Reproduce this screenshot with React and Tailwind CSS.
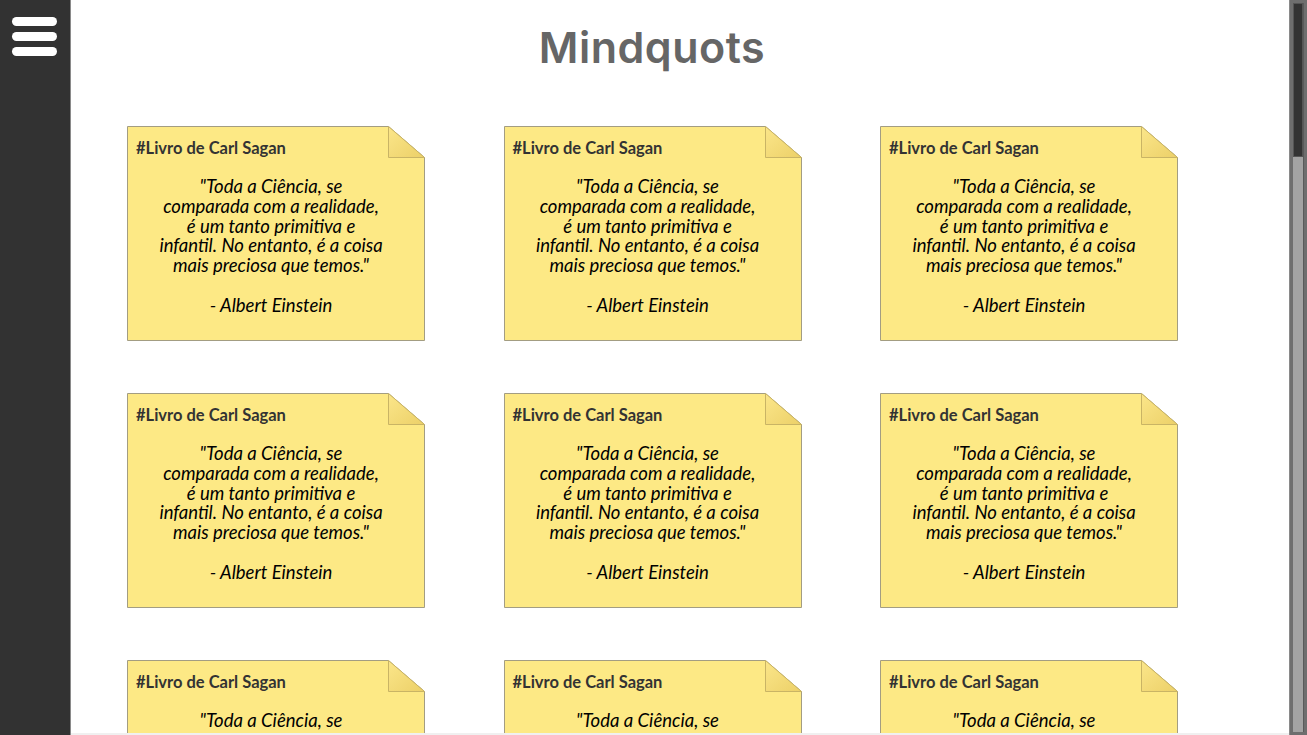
import React from 'react';

const quotes = Array.from({ length: 9 }, (_, i) => ({
  id: i,
  tag: '#Livro de Carl Sagan',
  lines: [
    '"Toda a Ciência, se',
    'comparada com a realidade,',
    'é um tanto primitiva e',
    'infantil. No entanto, é a coisa',
    'mais preciosa que temos."',
  ],
  author: '- Albert Einstein',
}));

// Sticky note with folded top-right corner
const NoteCard = ({ quote }) => (
  <div className="relative h-[215px] w-[298px]">
    <svg className="absolute inset-0" width="298" height="215" viewBox="0 0 298 215">
      <defs>
        <linearGradient id={`fold-${quote.id}`} x1="0" y1="0" x2="1" y2="1">
          <stop offset="0" stopColor="#fbe68a" />
          <stop offset="1" stopColor="#ecd068" />
        </linearGradient>
      </defs>
      <path d="M0.5 0.5 H261.5 L297.5 31.5 V214.5 H0.5 Z" fill="#fde985" stroke="#a39d82" />
      <path d="M261.5 0.5 V31.5 H297.5 Z" fill={`url(#fold-${quote.id})`} stroke="#c9b465" />
    </svg>
    <div className="relative px-[9px] pt-[13px] font-['Lato',sans-serif]">
      <div className="text-[16.5px] font-bold leading-[19px] text-[#333]">{quote.tag}</div>
      <div className="mt-[19px] pr-[10px] text-center text-[18.5px] italic leading-[19.8px] text-black">
        {quote.lines.map((l) => (
          <div key={l} className="whitespace-nowrap">{l}</div>
        ))}
        <div className="mt-[20px]">{quote.author}</div>
      </div>
    </div>
  </div>
);

export default function App() {
  return (
    <div className="flex h-[735px] w-[1307px] overflow-hidden bg-white">
      <aside className="w-[71px] shrink-0 border-r border-[#8a8a8a] bg-[#323232]">
        <div className="ml-[12px] mt-[17px] flex w-[45px] flex-col gap-[6px]">
          <span className="h-[9px] rounded-full bg-white" />
          <span className="h-[9px] rounded-full bg-white" />
          <span className="h-[9px] rounded-full bg-white" />
        </div>
      </aside>

      <main className="relative flex-1 overflow-hidden">
        <h1 className="pr-[56px] pt-[22px] text-center font-['Inter',sans-serif] text-[43px] font-semibold leading-[50px] tracking-[0.5px] text-[#666]">
          Mindquots
        </h1>
        <div className="mt-[54px] grid grid-cols-[repeat(3,298px)] gap-x-[78.5px] gap-y-[52px] pl-[56px]">
          {quotes.map((q) => (
            <NoteCard key={q.id} quote={q} />
          ))}
        </div>
        <div className="absolute bottom-0 left-0 right-0 h-[2px] bg-[#f0f0f0]" />
      </main>

      <div className="flex w-[18px] shrink-0 border-l border-[#8a8a8a] bg-[#6e6e6e] px-[3px] py-[3px]">
        <div className="flex flex-1 flex-col border-r border-[#5a5a5a]">
          <div className="h-[154px] border border-[#555] bg-[#333]" />
          <div className="flex-1 bg-[#a3a3a3]" />
        </div>
      </div>
    </div>
  );
}
